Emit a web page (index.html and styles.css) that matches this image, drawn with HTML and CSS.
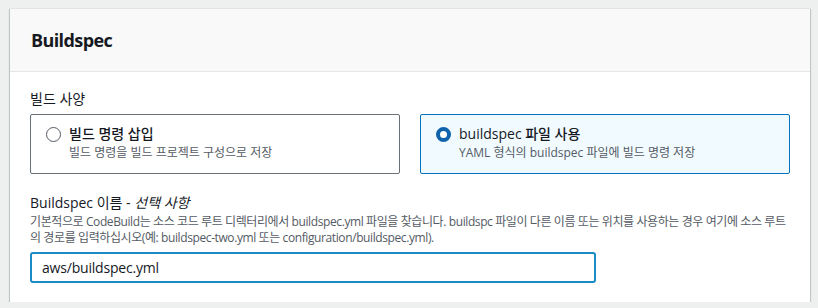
FILE: index.html
```html
<!DOCTYPE html>
<html lang="ko">
<head>
<meta charset="utf-8">
<link rel="stylesheet" href="styles.css">
</head>
<body>
<div class="card">
  <div class="card-header"><h2 class="title">Buildspec</h2></div>
  <div class="card-body">
    <div class="field-label">빌드 사양</div>
    <div class="tiles">
      <div class="tile">
        <span class="radio"></span>
        <div class="tile-text">
          <div class="tile-title">빌드 명령 삽입</div>
          <div class="tile-desc">빌드 명령을 빌드 프로젝트 구성으로 저장</div>
        </div>
      </div>
      <div class="tile selected">
        <span class="radio checked"></span>
        <div class="tile-text">
          <div class="tile-title">buildspec 파일 사용</div>
          <div class="tile-desc">YAML 형식의 buildspec 파일에 빌드 명령 저장</div>
        </div>
      </div>
    </div>
    <div class="field-label name-label">Buildspec 이름 - <i>선택 사항</i></div>
    <div class="field-desc">기본적으로 CodeBuild는 소스 코드 루트 디렉터리에서 buildspec.yml 파일을 찾습니다. buildspc 파일이 다른 이름 또는 위치를 사용하는 경우 여기에 소스 루트의 경로를 입력하십시오(예: buildspec-two.yml 또는 configuration/buildspec.yml).</div>
    <div class="input">aws/buildspec.yml</div>
  </div>
</div>
</body>
</html>
```
FILE: styles.css
```css
* { box-sizing: border-box; }
html, body { margin: 0; }
body {
  background: #eef0ef;
  padding: 8px 8px 0 10px;
  font-family: "Open Sans", "Noto Sans CJK KR", sans-serif;
  color: #16191f;
}
.card {
  width: 800px;
  background: #fff;
  border-top: 1px solid #e3e5e5;
  box-shadow: 0 1px 1px 0 rgba(0,28,36,.3), 1px 1px 1px 0 rgba(0,28,36,.15), -1px 1px 1px 0 rgba(0,28,36,.15);
}
.card-header {
  background: #f9f9f9;
  border-bottom: 1px solid #e6e6e6;
  padding: 19px 20px 19px 21px;
}
.title {
  margin: 0;
  font-size: 18px;
  line-height: 24px;
  font-weight: 700;
  letter-spacing: -0.6px;
}
.card-body {
  padding: 16px 20px 19px 20px;
}
.field-label {
  font-size: 14px;
  line-height: 22px;
}
.tiles {
  display: grid;
  grid-template-columns: 1fr 1fr;
  gap: 20px;
  margin-top: 4px;
  margin-bottom: 18px;
}
.tile {
  display: flex;
  align-items: flex-start;
  gap: 8px;
  height: 60px;
  padding: 8px 14px 0 15px;
  border: 1px solid #687078;
  border-radius: 2px;
}
.tile.selected {
  border-color: #0073bb;
  background: #f1faff;
}
.radio {
  flex: none;
  width: 15px;
  height: 15px;
  margin-top: 4px;
  border-radius: 50%;
  border: 1.5px solid #545b64;
  background: #fff;
}
.radio.checked {
  border: 4px solid #0f63ab;
}
.tile-title {
  font-size: 14px;
  line-height: 22px;
  font-weight: 500;
}
.tile-desc {
  font-size: 12px;
  line-height: 16px;
  color: #545b64;
}
.name-label i { font-style: italic; }
.field-desc {
  font-size: 12px;
  line-height: 16px;
  color: #545b64;
  letter-spacing: -0.4px;
}
.input {
  margin-top: 6px;
  width: 566px;
  height: 31px;
  border: 2px solid #1a8bc4;
  border-radius: 3px;
  padding: 0 10px;
  font-size: 14px;
  line-height: 27px;
  letter-spacing: -0.2px;
}
```
